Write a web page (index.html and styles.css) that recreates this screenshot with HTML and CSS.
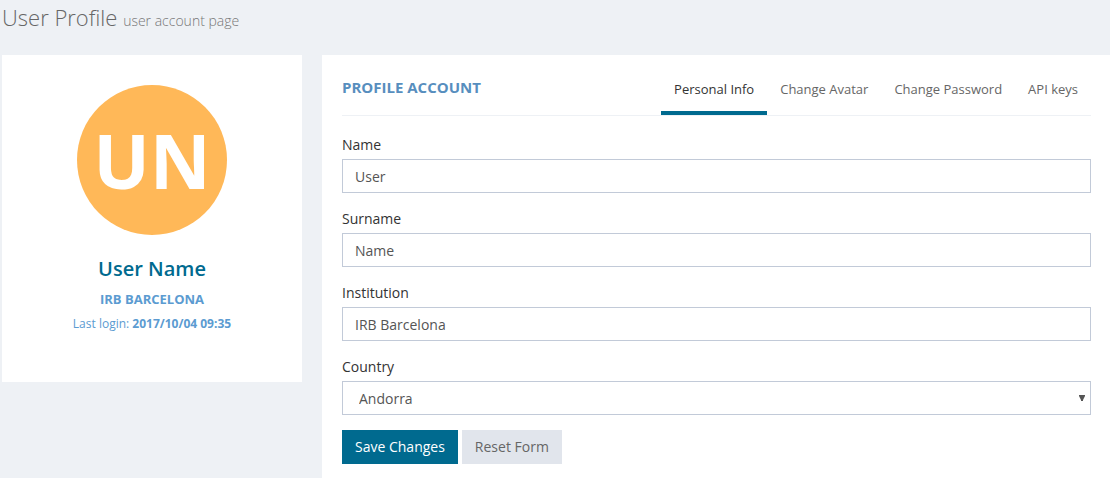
FILE: index.html
```html
<!DOCTYPE html>
<html lang="en">
<head>
<meta charset="utf-8">
<meta name="viewport" content="width=device-width, initial-scale=1">
<title>User Profile</title>
<link rel="stylesheet" href="styles.css">
</head>
<body>
<h1 class="page-title">User Profile <small>user account page</small></h1>
<div class="profile">
  <aside class="card sidebar">
    <div class="avatar">UN</div>
    <h2 class="user-name">User Name</h2>
    <p class="institution">IRB BARCELONA</p>
    <p class="last-login">Last login: <strong>2017/10/04 09:35</strong></p>
  </aside>
  <main class="card account">
    <header class="account-head">
      <h2 class="caption">PROFILE ACCOUNT</h2>
      <nav class="tabs">
        <a class="tab active" href="#personal">Personal Info</a>
        <a class="tab" href="#avatar">Change Avatar</a>
        <a class="tab" href="#password">Change Password</a>
        <a class="tab" href="#keys">API keys</a>
      </nav>
    </header>
    <form class="form" id="personal">
      <div class="field">
        <label for="name">Name</label>
        <input class="control" id="name" type="text" value="User">
      </div>
      <div class="field">
        <label for="surname">Surname</label>
        <input class="control" id="surname" type="text" value="Name">
      </div>
      <div class="field">
        <label for="institution">Institution</label>
        <input class="control" id="institution" type="text" value="IRB Barcelona">
      </div>
      <div class="field">
        <label for="country">Country</label>
        <div class="select-wrap">
          <select class="control select" id="country"><option>Andorra</option></select>
          <svg class="arrow" width="6" height="6" viewBox="0 0 6 6" aria-hidden="true"><path d="M0 0H6V1L4 5V6H2V5L0 1Z" fill="#555"/></svg>
        </div>
      </div>
      <div class="actions">
        <button class="btn primary" type="submit">Save Changes</button>
        <button class="btn" type="reset">Reset Form</button>
      </div>
    </form>
  </main>
</div>
</body>
</html>
```
FILE: styles.css
```css
* { box-sizing: border-box; }

body {
  margin: 0;
  background: #eef1f5;
  color: #333;
  font: 14px/20px "Open Sans", "Noto Sans", sans-serif;
}

h1, h2, p { margin: 0; }

.page-title {
  padding: 2px 2px 19px;
  color: #666;
  font-size: 22px;
  line-height: 30px;
  font-weight: 300;
}

.page-title small {
  color: #777;
  font-size: 14px;
}

.profile {
  display: flex;
  align-items: flex-start;
  gap: 20px;
  padding-left: 2px;
}

.card { background: #fff; }

.sidebar {
  flex: 0 0 300px;
  padding: 30px 0 48px;
  text-align: center;
  color: #5b9bd1;
}

.avatar {
  display: grid;
  place-items: center;
  width: 150px;
  height: 150px;
  margin: 0 auto 20px;
  border-radius: 50%;
  background: #ffb858;
  color: #fff;
  font-size: 75px;
  line-height: 150px;
  font-weight: 700;
}

.user-name {
  color: #006a8f;
  font-size: 20px;
  line-height: 28px;
  font-weight: 600;
}

.institution {
  padding-top: 6px;
  font-size: 13px;
  line-height: 20px;
  font-weight: 700;
}

.last-login {
  padding-top: 5px;
  font-size: 12px;
  line-height: 20px;
}

.account {
  flex: 1;
  min-width: 0;
  padding: 12px 19px 15px 20px;
}

.account-head {
  display: flex;
  justify-content: space-between;
  border-bottom: 1px solid #eef1f5;
}

.caption {
  padding-top: 10px;
  color: #578ebe;
  font-size: 15px;
  line-height: 20px;
  font-weight: 700;
}

.tabs { display: flex; }

.tab {
  padding: 12px 13px 12px;
  border-bottom: 4px solid transparent;
  color: #666;
  font-size: 13px;
  line-height: 20px;
  text-decoration: none;
}

.tab.active {
  border-color: #006a8f;
  color: #333;
}

.form { padding-top: 19px; }

.field + .field { margin-top: 16px; }

.field label {
  display: block;
  padding-bottom: 4px;
}

.control {
  display: block;
  width: 100%;
  height: 34px;
  padding: 6px 12px;
  border: 1px solid #c2cad8;
  border-radius: 0;
  background: #fff;
  color: #555;
  font: inherit;
}

.select {
  appearance: none;
  padding: 7px 16px 5px;
}

.select-wrap { position: relative; }

.arrow {
  position: absolute;
  top: 14px;
  right: 6px;
  pointer-events: none;
}

.actions {
  display: flex;
  gap: 4px;
  margin-top: 15px;
}

.btn {
  padding: 7px 13px;
  border: 0;
  background: #e1e5ec;
  color: #666;
  font: inherit;
}

.btn.primary {
  background: #006a8f;
  color: #fff;
}
```
